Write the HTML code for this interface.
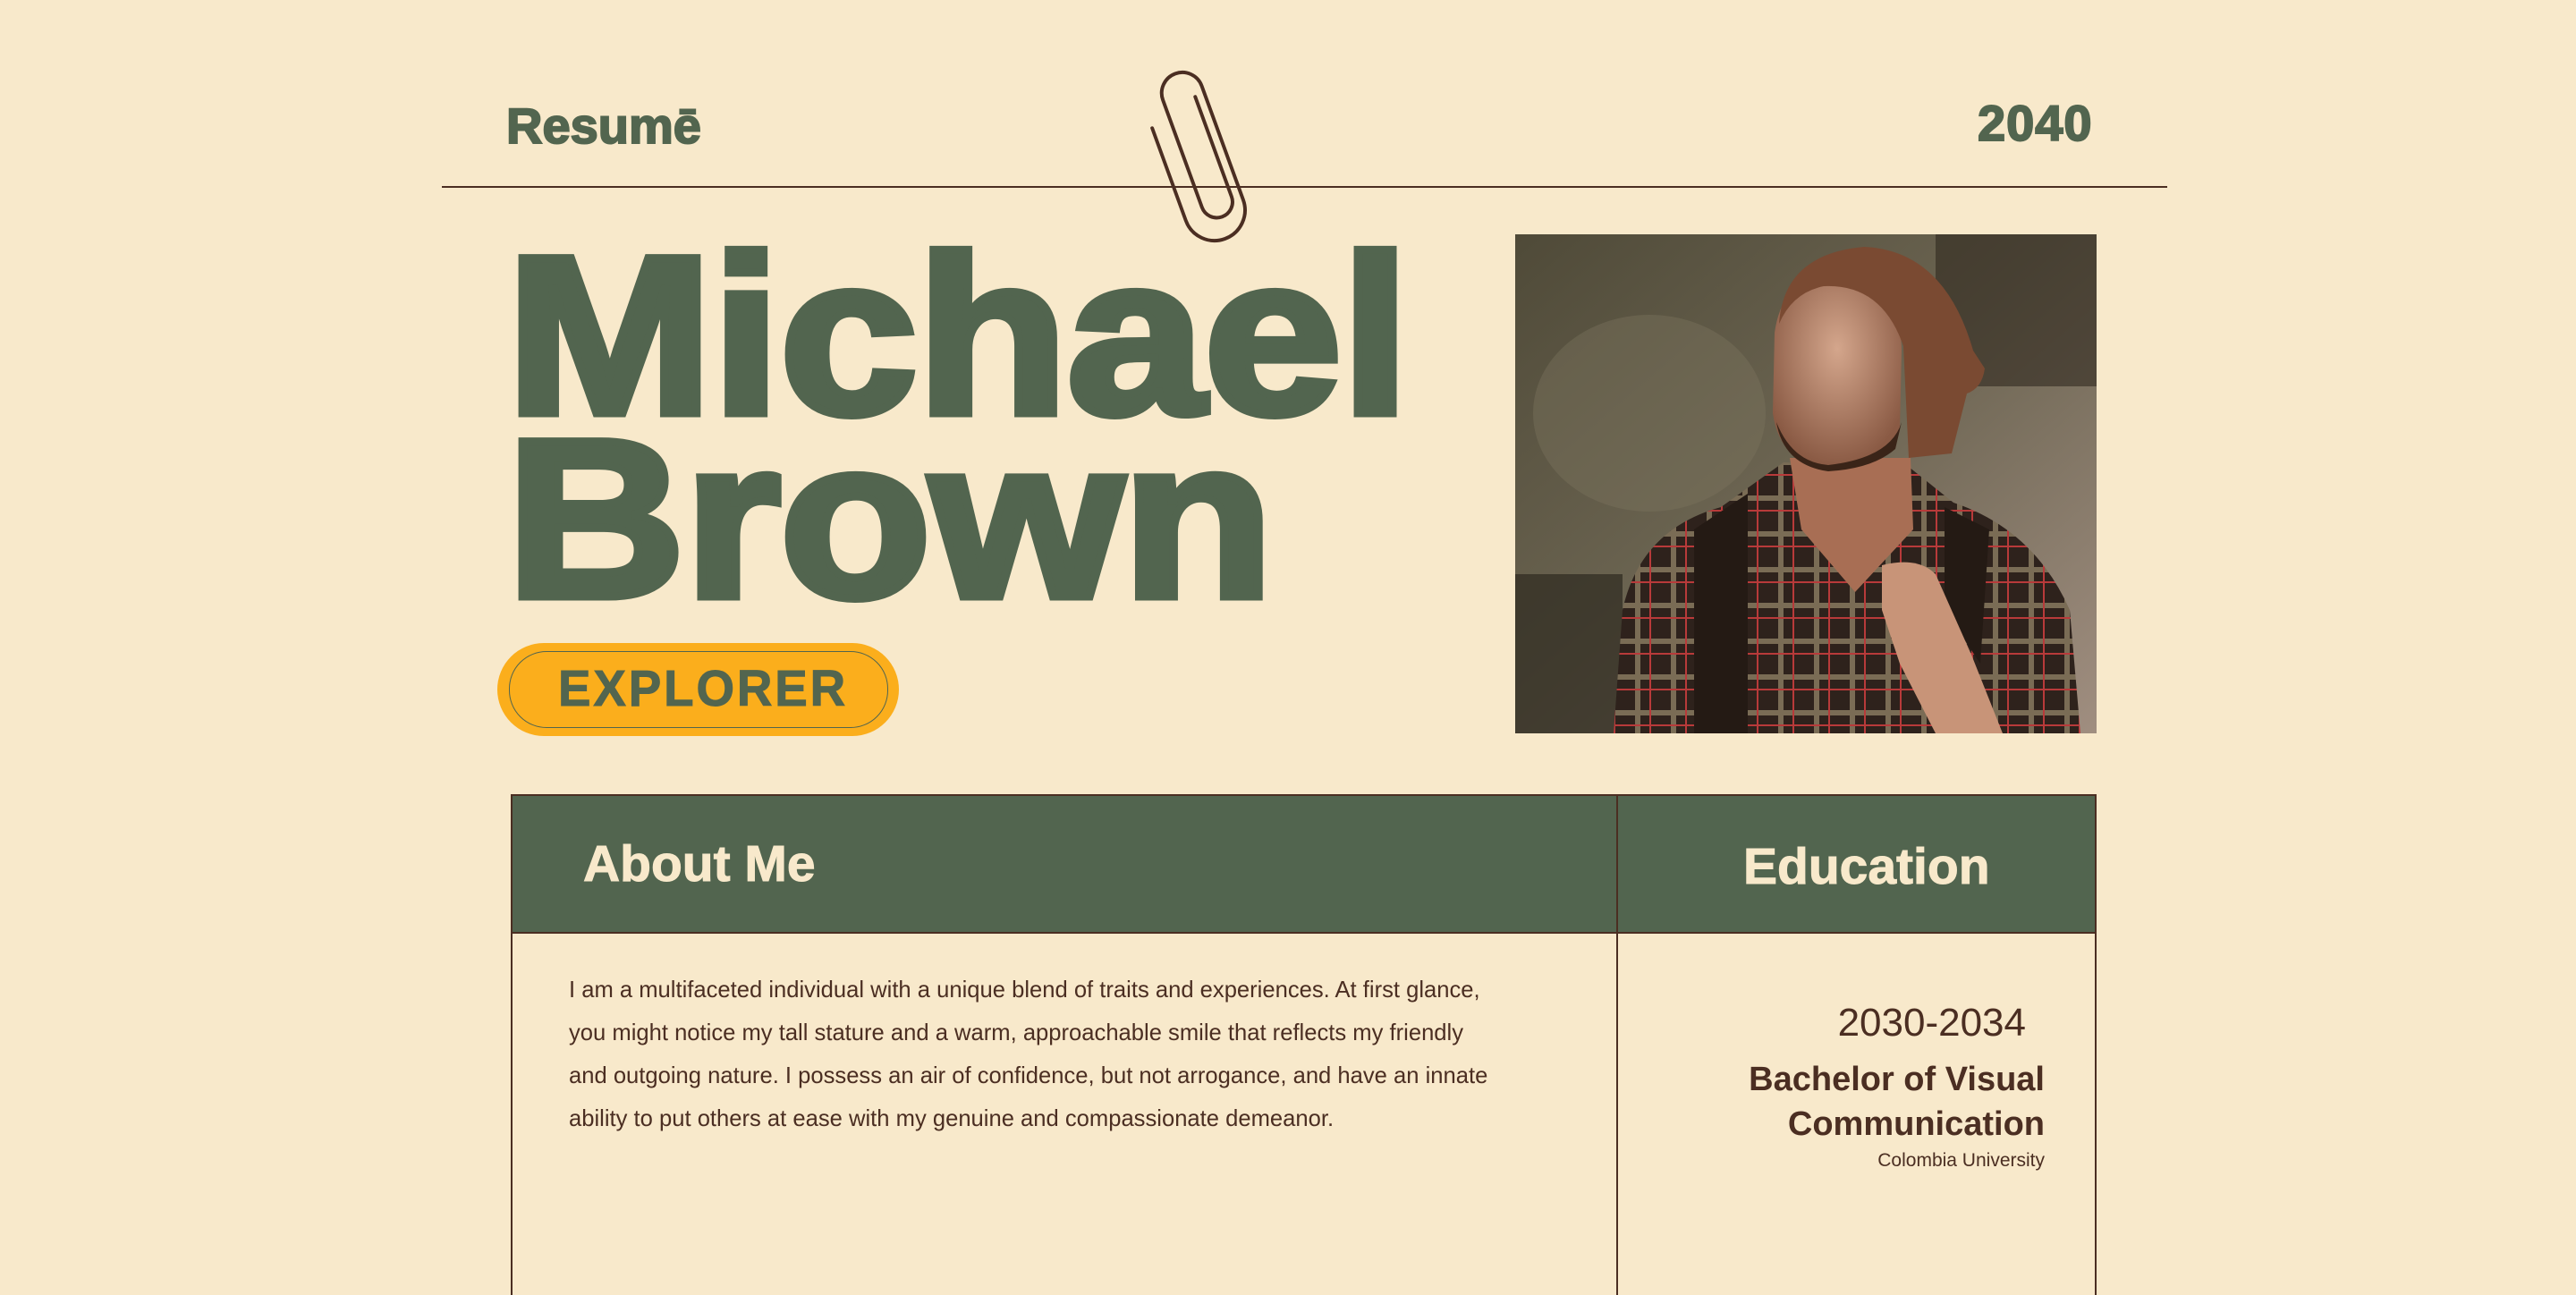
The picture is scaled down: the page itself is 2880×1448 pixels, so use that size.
<!DOCTYPE html>
<html><head><meta charset="utf-8"><style>
html,body{margin:0;padding:0}
body{width:2880px;height:1440px;background:#F8E9CB;position:relative;overflow:hidden;font-family:"Liberation Sans",sans-serif}
.a{position:absolute;white-space:nowrap}
.g{color:#52654F;font-weight:bold}
.hd{font-size:56px;line-height:56px;-webkit-text-stroke:2px #52654F}
.nm{font-size:252px;line-height:252px;-webkit-text-stroke:9px #52654F;letter-spacing:-1px;transform-origin:0 0;transform:scaleX(1.1)}
.br{color:#4B2E22}
</style></head><body>
<div class="a g hd" style="left:566px;top:113px;">Resumē</div>
<div class="a g hd" style="left:2211px;top:110px;letter-spacing:1px">2040</div>
<div class="a" style="left:494px;top:208px;width:1929px;height:2px;background:#4B2E22"></div>
<svg class="a" style="left:0;top:0" width="2880" height="400" viewBox="0 0 2880 400">
<g transform="translate(1336,175) rotate(-20) scale(1.1) translate(-31,-87)" fill="none" stroke="#4B2E22" stroke-width="3.6" stroke-linecap="round">
<path d="M0 45 V145 A31 31 0 0 0 62 145 V22 A21 21 0 0 0 20 22 V138 A16 16 0 0 0 52 138 V30"/>
</g></svg>
<div class="a g nm" style="left:566px;top:250px;">Michael</div>
<div class="a g nm" style="left:566px;top:455px;">Brown</div>
<div class="a" style="left:556px;top:719px;width:449px;height:104px;border-radius:52px;background:#FBAE1C"></div>
<div class="a" style="left:569px;top:728px;width:422px;height:84px;border-radius:42px;border:1.5px solid #52654F"></div>
<div class="a g" style="left:624px;top:742px;font-size:57px;line-height:57px;letter-spacing:3px;-webkit-text-stroke:1px #52654F;transform-origin:0 0;transform:scaleX(0.96)">EXPLORER</div>
<svg class="a" style="left:1694px;top:262px" width="650" height="558" viewBox="0 0 650 558">
<defs>
<linearGradient id="bg" x1="0" y1="0" x2="1" y2="1"><stop offset="0" stop-color="#4f4a38"/><stop offset=".45" stop-color="#6a6350"/><stop offset="1" stop-color="#a08e80"/></linearGradient>
<radialGradient id="f" cx=".5" cy=".4" r=".6"><stop offset="0" stop-color="#d4a68c"/><stop offset="1" stop-color="#8a5a44"/></radialGradient>
<pattern id="pl" width="40" height="40" patternUnits="userSpaceOnUse"><rect width="40" height="40" fill="#2e221c"/><rect x="0" y="12" width="40" height="6" fill="#7a6c55"/><rect x="14" y="0" width="6" height="40" fill="#7a6c55"/><rect x="0" y="28" width="40" height="2" fill="#b83a3a"/><rect x="30" y="0" width="2" height="40" fill="#b83a3a"/></pattern>
</defs>
<rect width="650" height="558" fill="url(#bg)"/>
<rect x="0" y="380" width="120" height="178" fill="#2e2a20" opacity=".7"/>
<rect x="470" y="0" width="180" height="170" fill="#2a2219" opacity=".55"/>
<ellipse cx="150" cy="200" rx="130" ry="110" fill="#7c7660" opacity=".4"/>
<path d="M110 558 L120 420 Q140 330 230 305 L300 255 L440 260 L490 300 Q580 330 620 420 L632 558Z" fill="url(#pl)"/>
<path d="M200 330 L260 290 L260 558 L200 558Z M480 305 L530 330 L520 480 L480 420Z" fill="#241a14"/>
<path d="M307 250 L442 250 L445 330 L380 400 L320 330Z" fill="#a86e54"/>
<path d="M290 110 Q300 40 370 40 Q430 45 432 130 L430 220 Q420 255 340 260 Q295 250 288 200Z" fill="url(#f)"/>
<path d="M292 210 Q310 255 350 258 Q420 250 432 210 L425 240 Q400 262 350 265 Q300 258 292 210Z" fill="#3a2418"/>
<path d="M295 100 Q300 22 390 14 Q480 18 512 130 L525 150 Q522 172 505 178 L488 245 L440 250 L434 125 Q410 55 345 58 Q310 65 295 100Z" fill="#7a4a32"/>
<path d="M410 370 Q450 360 470 380 L510 470 L545 558 L470 558 L430 480 L410 420Z" fill="#c89478"/>
</svg>
<div class="a" style="left:571px;top:888px;width:1773px;height:156px;background:#52654F;border-top:2px solid #4B2E22;border-bottom:2px solid #4B2E22;box-sizing:border-box"></div>
<div class="a" style="left:571px;top:888px;width:2px;height:560px;background:#4B2E22"></div>
<div class="a" style="left:1807px;top:888px;width:2px;height:560px;background:#4B2E22"></div>
<div class="a" style="left:2342px;top:888px;width:2px;height:560px;background:#4B2E22"></div>
<div class="a" style="left:652px;top:938px;font-size:57px;line-height:57px;font-weight:bold;color:#F8E9CB;-webkit-text-stroke:1px #F8E9CB">About Me</div>
<div class="a" style="left:1949px;top:941px;font-size:57px;line-height:57px;font-weight:bold;color:#F8E9CB;-webkit-text-stroke:1px #F8E9CB">Education</div>
<div class="a br" style="left:636px;top:1083px;font-size:25.6px;line-height:48px;">I am a multifaceted individual with a unique blend of traits and experiences. At first glance,<br>you might notice my tall stature and a warm, approachable smile that reflects my friendly<br>and outgoing nature. I possess an air of confidence, but not arrogance, and have an innate<br>ability to put others at ease with my genuine and compassionate demeanor.</div>
<div class="a br" style="right:615px;top:1122px;font-size:44px;line-height:44px;">2030-2034</div>
<div class="a br" style="right:594px;top:1182px;font-size:38px;line-height:50px;font-weight:bold;text-align:right">Bachelor of Visual<br>Communication</div>
<div class="a br" style="right:594px;top:1286px;font-size:21px;line-height:24px;">Colombia University</div>
</body></html>
